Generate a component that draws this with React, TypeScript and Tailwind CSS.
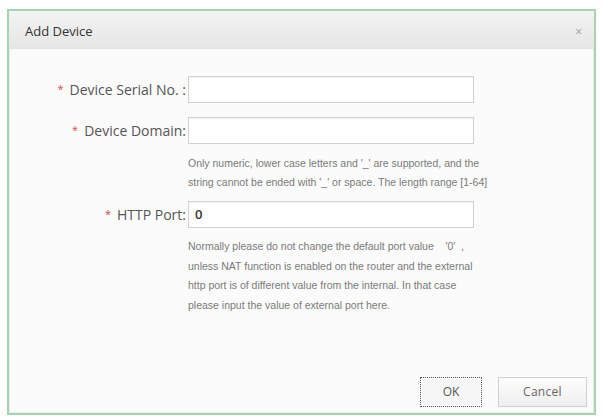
export default function App() {
  return (
    <div className="h-[420px] w-[603px] bg-white px-[7px] pb-[5px] pt-[9px] font-['Open_Sans',sans-serif]">
      <div className="flex h-[406px] flex-col border-2 border-[#a8d3b0] bg-[#fbfbfb] shadow-[inset_0_0_0_1px_#e6efe8]">
        {/* Header */}
        <div className="flex h-[38px] items-center justify-between border-b border-[#e4e4e4] bg-gradient-to-b from-[#f3f3f3] to-[#e6e6e6] pl-[16px] pr-[12px] pt-[4px]">
          <span className="text-[13px] text-[#333]">Add Device</span>
          <span className="text-[12px] leading-none text-[#9a9a9a]">×</span>
        </div>

        {/* Body */}
        <div className="flex flex-1 flex-col pt-[27px]">
          <Row label="Device Serial No. :" />
          <Row label="Device Domain:" className="mt-[14px]" />
          <p className="ml-[179px] mt-[10px] font-['Liberation_Sans',sans-serif] text-[10.5px] leading-[19px] text-[#7a7a7a]">
            Only numeric, lower case letters and '_' are supported, and the
            <br />
            string cannot be ended with '_' or space. The length range [1-64]
          </p>
          <Row label="HTTP Port:" value="0" className="mt-[9px]" />
          <p className="ml-[179px] mt-[9px] font-['Liberation_Sans',sans-serif] text-[10.5px] leading-[19.5px] text-[#7a7a7a]">
            Normally please do not change the default port value &nbsp;&nbsp; '0' &nbsp;,
            <br />
            unless NAT function is enabled on the router and the external
            <br />
            http port is of different value from the internal. In that case
            <br />
            please input the value of external port here.
          </p>

          <div className="mt-auto flex justify-end gap-[16px] pb-[6px] pr-[7px]">
            <button className="h-[30px] w-[62px] border border-dotted border-[#555] bg-[#f6f6f6] text-[12px] text-[#555] shadow-[inset_0_0_0_1px_#fff]">
              OK
            </button>
            <button className="h-[30px] w-[89px] border border-[#cfcfcf] bg-gradient-to-b from-[#fdfdfd] to-[#efefef] text-[12px] tracking-wide text-[#666]">
              Cancel
            </button>
          </div>
        </div>
      </div>
    </div>
  );
}

function Row({ label, value, className = '' }: { label: string; value?: string; className?: string }) {
  return (
    <div className={`flex items-center ${className}`}>
      <div className="flex w-[179px] items-center justify-end pr-[2px] text-[14px] text-[#555]">
        <span className="mr-[6px] text-[11px] text-[#e04646]">*</span>
        <span>{label}</span>
      </div>
      <div className="flex h-[27px] w-[286px] items-center border border-[#d2d2d2] bg-white pl-[6px] text-[13px] font-semibold text-[#333] shadow-[inset_0_1px_1px_rgba(0,0,0,0.06)]">
        {value}
      </div>
    </div>
  );
}
